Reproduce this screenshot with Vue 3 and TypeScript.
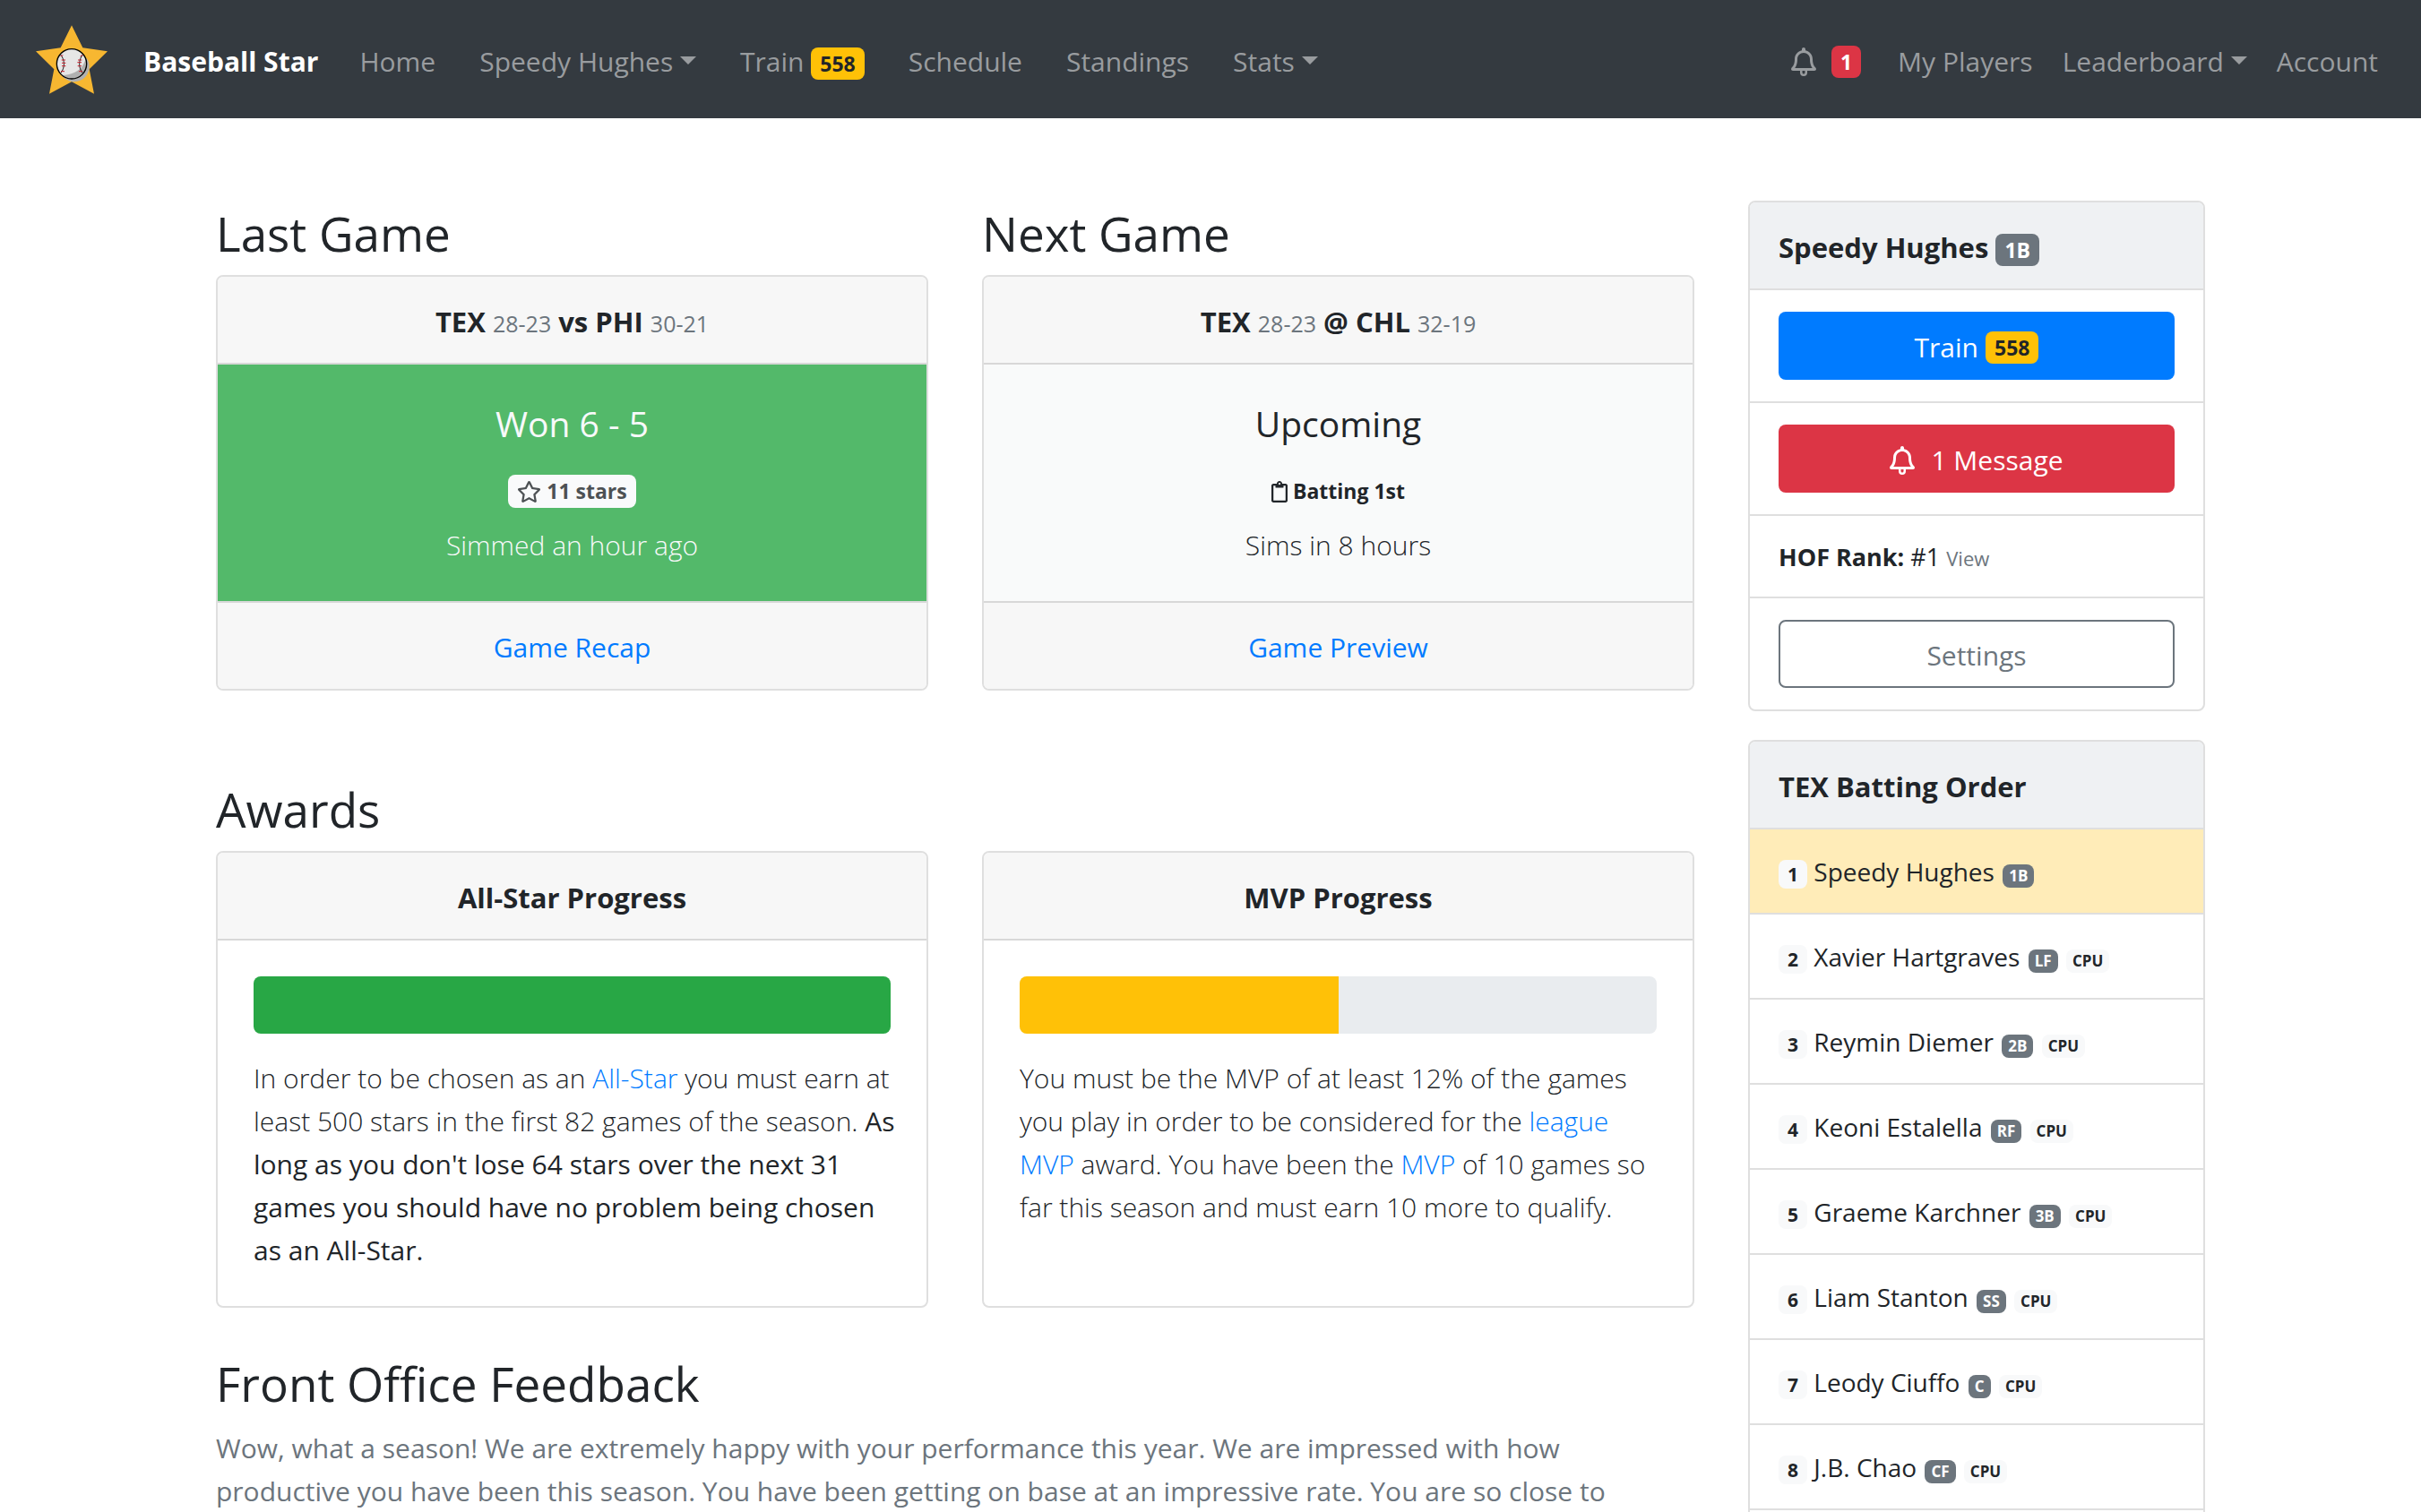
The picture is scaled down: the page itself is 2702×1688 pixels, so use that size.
<script setup lang="ts">
interface NavItem {
  label: string
  badge?: string
  dropdown?: boolean
}

interface Batter {
  name: string
  position: string
  cpu: boolean
}

const mainLinks: NavItem[] = [
  { label: 'Home' },
  { label: 'Speedy Hughes', dropdown: true },
  { label: 'Train', badge: '558' },
  { label: 'Schedule' },
  { label: 'Standings' },
  { label: 'Stats', dropdown: true },
]

const userLinks: NavItem[] = [
  { label: 'My Players' },
  { label: 'Leaderboard', dropdown: true },
  { label: 'Account' },
]

const battingOrder: Batter[] = [
  { name: 'Speedy Hughes', position: '1B', cpu: false },
  { name: 'Xavier Hartgraves', position: 'LF', cpu: true },
  { name: 'Reymin Diemer', position: '2B', cpu: true },
  { name: 'Keoni Estalella', position: 'RF', cpu: true },
  { name: 'Graeme Karchner', position: '3B', cpu: true },
  { name: 'Liam Stanton', position: 'SS', cpu: true },
  { name: 'Leody Ciuffo', position: 'C', cpu: true },
  { name: 'J.B. Chao', position: 'CF', cpu: true },
]

const allStarPercent = 100
const mvpPercent = 50

const bellPath =
  'M439.39 362.29c-19.32-20.76-55.47-51.99-55.47-154.29 0-77.7-54.48-139.9-127.94-155.16V32c0-17.67-14.32-32-31.98-32s-31.98 14.33-31.98 32v20.84C118.56 68.1 64.08 130.3 64.08 208c0 102.3-36.15 133.53-55.47 154.29-6 6.45-8.66 14.16-8.61 21.71.11 16.4 12.98 32 32.1 32h383.8c19.12 0 32-15.6 32.1-32 .05-7.55-2.61-15.27-8.61-21.71zM67.53 368c21.22-27.97 44.42-74.33 44.53-159.42 0-.2-.06-.38-.06-.58 0-61.86 50.14-112 112-112s112 50.14 112 112c0 .2-.06.38-.06.58.11 85.1 23.31 131.46 44.53 159.42H67.53z'
const clapperPath = 'M160 416v32a64 64 0 0 0 128 0v-32h-40v32a24 24 0 0 1-48 0v-32z'
</script>

<template>
  <div class="page">
    <header class="navbar">
      <a class="logo" href="#" aria-label="Baseball Star home">
        <svg viewBox="30 38 240 231" width="80" height="77" aria-hidden="true">
          <polygon
            fill="#f7b731"
            points="150,39 187,114 270,126 209,186 225,268 150,228 75,268 91,186 30,126 113,114"
          />
          <circle cx="150" cy="168" r="50" fill="#e6e6e6" />
          <path d="M200 148a50 50 0 0 1-83 58c28 0 60-12 72-36 4-8 7-15 11-22z" fill="#b0b0b0" />
          <circle cx="150" cy="168" r="50" fill="none" stroke="#000" stroke-width="4" />
          <path d="M112 136c16 18 16 46 1 63M188 136c-16 18-16 46-1 63" fill="none" stroke="#1d1d1d" stroke-width="3" />
          <path
            d="M113 142l8-3M116 155h13M117 165h13M117 175h13M114 193h12M179 142l8-3M171 155h13M169 163h14M170 175h13M174 193h12"
            stroke="#c9222f"
            stroke-width="3"
          />
        </svg>
      </a>
      <a class="brand" href="#">Baseball Star</a>
      <nav class="links main-links">
        <a v-for="item in mainLinks" :key="item.label" href="#">
          {{ item.label }}
          <span v-if="item.badge" class="badge warning">{{ item.badge }}</span>
          <span v-if="item.dropdown" class="caret"></span>
        </a>
      </nav>
      <nav class="links user-links">
        <a href="#" class="alerts" aria-label="Messages">
          <svg viewBox="0 0 448 512" width="28" height="32" aria-hidden="true">
            <path :d="bellPath" fill="currentColor" />
            <path :d="clapperPath" fill="currentColor" />
          </svg>
          <span class="badge danger">1</span>
        </a>
        <a v-for="item in userLinks" :key="item.label" href="#">
          {{ item.label }}
          <span v-if="item.dropdown" class="caret"></span>
        </a>
      </nav>
    </header>

    <div class="container">
      <main class="main">
        <div class="row games">
          <section>
            <h2>Last Game</h2>
            <div class="card">
              <div class="card-header">TEX <small>28-23</small> vs PHI <small>30-21</small></div>
              <div class="result won">
                <h3>Won 6 - 5</h3>
                <span class="note stars">
                  <svg viewBox="0 0 576 512" width="27" height="24" aria-hidden="true">
                    <path
                      fill="currentColor"
                      d="M528.1 171.5L382 150.2 316.7 17.8c-11.7-23.6-45.6-23.9-57.4 0L194 150.2 47.9 171.5c-26.2 3.8-36.7 36.1-17.7 54.6l105.7 103-25 145.5c-4.5 26.3 23.2 46 46.4 33.7L288 439.6l130.7 68.7c23.2 12.2 50.9-7.4 46.4-33.7l-25-145.5 105.7-103c19-18.5 8.5-50.8-17.7-54.6zM388.6 312.3l23.7 138.4L288 385.4l-124.3 65.3 23.7-138.4-100.6-98 139-20.2 62.2-126 62.2 126 139 20.2-100.6 98z"
                    />
                  </svg>
                  11 stars
                </span>
                <p>Simmed an hour ago</p>
              </div>
              <div class="card-footer"><a href="#">Game Recap</a></div>
            </div>
          </section>
          <section>
            <h2>Next Game</h2>
            <div class="card">
              <div class="card-header">TEX <small>28-23</small> @ CHL <small>32-19</small></div>
              <div class="result upcoming">
                <h3>Upcoming</h3>
                <span class="note">
                  <svg viewBox="0 0 384 512" width="18" height="24" aria-hidden="true">
                    <path
                      fill="currentColor"
                      d="M336 64h-80c0-35.300-28.700-64-64-64s-64 28.700-64 64H48C21.500 64 0 85.500 0 112v352c0 26.500 21.500 48 48 48h288c26.500 0 48-21.500 48-48V112c0-26.500-21.500-48-48-48zM192 40c13.300 0 24 10.700 24 24s-10.700 24-24 24-24-10.700-24-24 10.700-24 24-24zm144 418c0 3.300-2.700 6-6 6H54c-3.300 0-6-2.700-6-6V118c0-3.300 2.700-6 6-6h42v36c0 6.600 5.400 12 12 12h168c6.600 0 12-5.400 12-12v-36h42c3.300 0 6 2.700 6 6z"
                    />
                  </svg>
                  Batting 1st
                </span>
                <p>Sims in 8 hours</p>
              </div>
              <div class="card-footer"><a href="#">Game Preview</a></div>
            </div>
          </section>
        </div>

        <section class="awards">
          <h2>Awards</h2>
          <div class="row">
            <div class="card">
              <div class="card-header">All-Star Progress</div>
              <div class="card-body">
                <div class="progress" role="progressbar" aria-label="All-Star Progress" :aria-valuenow="allStarPercent">
                  <div class="bar success" :style="{ width: allStarPercent + '%' }"></div>
                </div>
                <p>
                  In order to be chosen as an <a href="#">All-Star</a> you must earn at least 500 stars in the
                  first 82 games of the season.
                  <span class="outlook">As long as you don't lose 64 stars over the next 31 games you should have no problem being chosen as an All-Star.</span>
                </p>
              </div>
            </div>
            <div class="card">
              <div class="card-header">MVP Progress</div>
              <div class="card-body">
                <div class="progress" role="progressbar" aria-label="MVP Progress" :aria-valuenow="mvpPercent">
                  <div class="bar pending" :style="{ width: mvpPercent + '%' }"></div>
                </div>
                <p>
                  You must be the MVP of at least 12% of the games you play in order to be considered for the
                  <a href="#">league MVP</a> award. You have been the <a href="#">MVP</a> of 10 games so far this
                  season and must earn 10 more to qualify.
                </p>
              </div>
            </div>
          </div>
        </section>

        <section class="feedback">
          <h2>Front Office Feedback</h2>
          <p>
            Wow, what a season! We are extremely happy with your performance this year. We are impressed with how
            productive you have been this season. You have been getting on base at an impressive rate. You are so
            close to
          </p>
        </section>
      </main>

      <aside class="sidebar">
        <div class="card">
          <div class="side-header">Speedy Hughes <span class="badge secondary">1B</span></div>
          <div class="side-row"><button class="btn primary" type="button">Train <span class="badge warning">558</span></button></div>
          <div class="side-row">
            <button class="btn alert" type="button">
              <svg viewBox="0 0 448 512" width="28" height="32" aria-hidden="true">
                <path :d="bellPath" fill="currentColor" />
                <path :d="clapperPath" fill="currentColor" />
              </svg>
              1 Message
            </button>
          </div>
          <div class="side-row rank"><strong>HOF Rank:</strong> #1 <a href="#">View</a></div>
          <div class="side-row"><button class="btn outline" type="button">Settings</button></div>
        </div>

        <div class="card">
          <div class="side-header">TEX Batting Order</div>
          <ol class="order">
            <li v-for="(batter, index) in battingOrder" :key="batter.name" :class="{ current: index === 0 }">
              <span class="badge light number">{{ index + 1 }}</span>
              {{ batter.name }}
              <span class="badge secondary small">{{ batter.position }}</span>
              {{ ' ' }}
              <span v-if="batter.cpu" class="badge light small">CPU</span>
            </li>
          </ol>
        </div>
      </aside>
    </div>
  </div>
</template>

<style>
body {
  margin: 0;
  background: #fff;
}
</style>

<style scoped>
.page {
  height: 100vh;
  overflow: hidden;
  color: #212529;
  font-family: 'Open Sans', 'Noto Sans', sans-serif;
  font-size: 30px;
  line-height: 48px;
}

.page *,
.page {
  box-sizing: border-box;
}

a {
  color: #007bff;
  text-decoration: none;
}

h2,
h3,
p {
  margin: 0;
}

.navbar {
  display: flex;
  align-items: center;
  min-height: 132px;
  padding: 0 48px 0 40px;
  background: #343a40;
}

.logo {
  display: flex;
  margin-right: 40px;
}

.brand,
.links {
  padding-top: 5px;
}

.brand {
  margin-right: 46px;
  color: #fff;
  font-weight: 700;
}

.links {
  display: flex;
}

.links a {
  display: block;
  color: #999c9f;
  white-space: nowrap;
}

.main-links {
  gap: 49px;
}

.user-links {
  gap: 33px;
  margin-left: auto;
}

.links .alerts {
  display: flex;
  align-items: center;
  gap: 17px;
  margin-right: 8px;
}

.caret {
  display: inline-block;
  border: 9px solid transparent;
  border-top-color: currentColor;
  border-bottom: 0;
  vertical-align: 8px;
}

.badge {
  display: inline-block;
  padding: 6px 10px;
  border-radius: 8px;
  font-size: 23px;
  font-weight: 700;
  line-height: 24px;
  text-align: center;
}

.badge.warning {
  background: #ffc107;
  color: #212529;
}

.badge.danger {
  background: #dc3545;
  color: #fff;
}

.badge.secondary {
  background: #6c757d;
  color: #fff;
}

.badge.light {
  background: #f8f9fa;
  color: #212529;
}

.badge.number {
  padding: 5px 10px;
  font-size: 21px;
  line-height: 22px;
}

.badge.small {
  margin-left: 2px;
  padding: 4px 7px;
  font-size: 17px;
  line-height: 18px;
}

.container {
  display: flex;
  gap: 60px;
  max-width: 2220px;
  margin: 0 auto;
  padding: 92px 0 0;
}

.main {
  flex: 1;
  min-width: 0;
}

.sidebar {
  flex: none;
  width: 510px;
}

.row {
  display: grid;
  grid-template-columns: 1fr 1fr;
  gap: 60px;
}

h2 {
  padding: 3px 0 13px;
  font-size: 53px;
  font-weight: 400;
  line-height: 67px;
}

.card {
  border: 2px solid #dfdfdf;
  border-radius: 8px;
  overflow: hidden;
}

.card-header,
.card-footer {
  padding: 26px 40px 22px;
  background: #f7f7f7;
  text-align: center;
}

.card-header {
  border-bottom: 2px solid #d8d8d8;
  font-size: 31px;
  font-weight: 700;
}

.card-header small {
  color: #6c757d;
  font-size: 25px;
  font-weight: 400;
  line-height: 1;
}

.card-footer {
  border-top: 2px solid #d8d8d8;
}

.result {
  display: flex;
  flex-direction: column;
  align-items: center;
  padding: 42px 40px 38px;
}

.result.won {
  background: #53b96a;
  color: #f8f9fa;
}

.result.upcoming {
  background: #f9fafa;
}

h3 {
  font-size: 39px;
  font-weight: 400;
  line-height: 48px;
}

.note {
  display: flex;
  align-items: center;
  gap: 6px;
  margin: 33px 0 18px;
  padding: 6px 10px;
  border-radius: 8px;
  font-size: 23px;
  font-weight: 700;
  line-height: 25px;
}

.note.stars {
  background: #f9fafb;
  color: #4d5154;
}

.result p,
.card-body p {
  font-weight: 300;
}

.awards {
  padding-top: 96px;
}

.card-body {
  padding: 40px 34px 38px 40px;
}

.progress {
  display: flex;
  height: 64px;
  margin: 0 6px 26px 0;
  border-radius: 8px;
  background: #e9ecef;
  overflow: hidden;
}

.bar.success {
  background: #28a745;
}

.bar.pending {
  background: #ffc107;
}

.card-body .outlook {
  font-weight: 400;
}

.feedback {
  padding-top: 48px;
  color: #6c757d;
}

.feedback h2 {
  padding-bottom: 15px;
  color: #212529;
}

.sidebar .card {
  margin-bottom: 32px;
}

.side-header {
  padding: 26px 32px 22px;
  background: #eff1f3;
  font-size: 31px;
  font-weight: 700;
}

.side-row {
  padding: 24px 32px;
  border-top: 2px solid #dfdfdf;
}

.side-row.rank {
  padding: 25px 32px 23px;
  font-size: 27px;
  line-height: 42px;
}

.rank a {
  color: #6c757d;
  font-size: 22px;
  line-height: 1;
}

.btn {
  display: flex;
  align-items: center;
  justify-content: center;
  gap: 8px;
  width: 100%;
  height: 76px;
  padding: 4px 24px 0;
  border: 2px solid transparent;
  border-radius: 8px;
  font: inherit;
  cursor: pointer;
}

.btn.primary {
  background: #007bff;
  color: #fff;
}

.btn.alert {
  gap: 18px;
  background: #dc3545;
  color: #fff;
}

.btn.outline {
  border-color: #6c757d;
  background: #fff;
  color: #6c757d;
}

.order {
  margin: 0;
  padding: 0 0 24px;
  list-style: none;
  font-size: 28px;
  line-height: 45px;
}

.order li {
  padding: 25px 32px 23px;
  border-top: 2px solid #dfdfdf;
}

.order li.current {
  background: #ffecb8;
}

.order li:last-child {
  border-bottom: 2px solid #dfdfdf;
}
</style>
